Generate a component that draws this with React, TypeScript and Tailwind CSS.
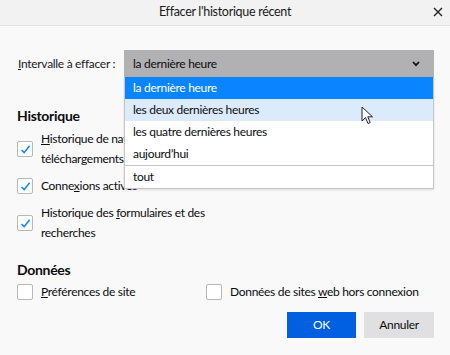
import React from 'react';

const font = { fontFamily: 'Lato, "Noto Sans", sans-serif' };

const Check = ({ checked }: { checked?: boolean }) => (
  <div className="w-4 h-4 shrink-0 bg-white border border-[#b8b8bb] rounded-[2px] flex items-center justify-center">
    {checked && (
      <svg width="11" height="11" viewBox="0 0 11 11">
        <path d="M1.5 6 L4.2 8.6 L9.6 1.8" fill="none" stroke="#0a84ff" strokeWidth="1.5" />
      </svg>
    )}
  </div>
);

const Cursor = () => (
  <svg width="13" height="19" viewBox="0 0 13 19" className="absolute left-[236px] top-[29px]">
    <path d="M1 1 L1 15 L4.5 11.6 L7 17.5 L9.2 16.6 L6.8 10.8 L11.5 10.8 Z" fill="#fff" stroke="#222" strokeWidth="1" strokeLinejoin="round" />
  </svg>
);

const options = ['la dernière heure', 'les deux dernières heures', 'les quatre dernières heures', 'aujourd’hui'];

export default function App() {
  return (
    <div className="w-[450px] h-[355px] bg-[#f9f9fa] text-[#0c0c0d] text-[12px] tracking-[-0.3px] flex flex-col overflow-hidden" style={font}>
      {/* barre de titre */}
      <div className="h-[26px] shrink-0 bg-[#f2f2f2] border-b border-[#e2e2e3] flex items-center justify-center relative">
        <span className="text-[12.5px] text-[#1a1a1a]">Effacer l'historique récent</span>
        <svg width="10" height="10" viewBox="0 0 10 10" className="absolute right-[7px] top-[7px]">
          <path d="M1 1 L9 9 M9 1 L1 9" stroke="#222" strokeWidth="1.4" />
        </svg>
      </div>

      <div className="flex flex-col pl-[17px] pr-[16px]">
        {/* intervalle */}
        <div className="flex items-center mt-[24px] h-[27px]">
          <span className="w-[107px] pl-[1px] text-[#1a1a1a] whitespace-nowrap">
            <span className="underline">I</span>ntervalle à effacer :
          </span>
          <div className="relative flex-1 h-[27px]">
            <div className="h-full bg-[#b1b1b3] flex items-center justify-between pl-[9px] pr-[14px]">
              <span>la dernière heure</span>
              <svg width="8" height="6" viewBox="0 0 8 6">
                <path d="M1 1 L4 4.2 L7 1" fill="none" stroke="#111" strokeWidth="1.8" />
              </svg>
            </div>
            <div className="absolute top-full left-0 right-0 z-10 bg-white border border-[#c6c6c8] border-t-0 shadow-[0_1px_2px_rgba(0,0,0,0.12)]">
              {options.map((o, i) => (
                <div
                  key={o}
                  className={
                    i === 0
                      ? 'h-[22px] flex items-center pl-[8px] bg-[#0a84ff] text-white'
                      : i === 1
                      ? 'h-[22px] flex items-center pl-[8px] bg-[#dcebfc]'
                      : 'h-[22px] flex items-center pl-[8px]'
                  }
                >
                  {o}
                </div>
              ))}
              <div className="h-px bg-[#c6c6c8]" />
              <div className="h-[22px] flex items-center pl-[8px]">tout</div>
              <Cursor />
            </div>
          </div>
        </div>

        {/* historique */}
        <div className="mt-[28px] text-[14px] font-bold h-[20px] flex items-center">Historique</div>
        <div className="flex flex-col mt-[4px] gap-[7px]">
          <div className="flex items-center gap-[8px]">
            <Check checked />
            <span className="leading-[20px] w-[168px]">
              <span className="underline">H</span>istorique de navigation et des téléchargements
            </span>
          </div>
          <div className="flex items-center gap-[8px] h-[20px]">
            <Check checked />
            <span>
              Conne<span className="underline">x</span>ions actives
            </span>
          </div>
          <div className="flex items-center gap-[8px]">
            <Check checked />
            <span className="leading-[20px] w-[168px]">
              Historique des <span className="underline">f</span>ormulaires et des recherches
            </span>
          </div>
        </div>

        {/* données */}
        <div className="mt-[16px] text-[14px] font-bold h-[20px] flex items-center">Données</div>
        <div className="flex items-center mt-[5px] h-[16px]">
          <div className="flex items-center gap-[8px] w-[189px]">
            <Check />
            <span>
              <span className="underline">P</span>références de site
            </span>
          </div>
          <div className="flex items-center gap-[8px] whitespace-nowrap">
            <Check />
            <span>
              Données de sites <span className="underline">w</span>eb hors connexion
            </span>
          </div>
        </div>

        {/* boutons */}
        <div className="flex justify-end gap-[8px] mt-[12px]">
          <button className="w-[69px] h-[26px] bg-[#0060df] text-white text-[12px]">OK</button>
          <button className="w-[70px] h-[26px] bg-[#e0e0e2] text-[#0c0c0d] text-[12px]">Annuler</button>
        </div>
      </div>
    </div>
  );
}
